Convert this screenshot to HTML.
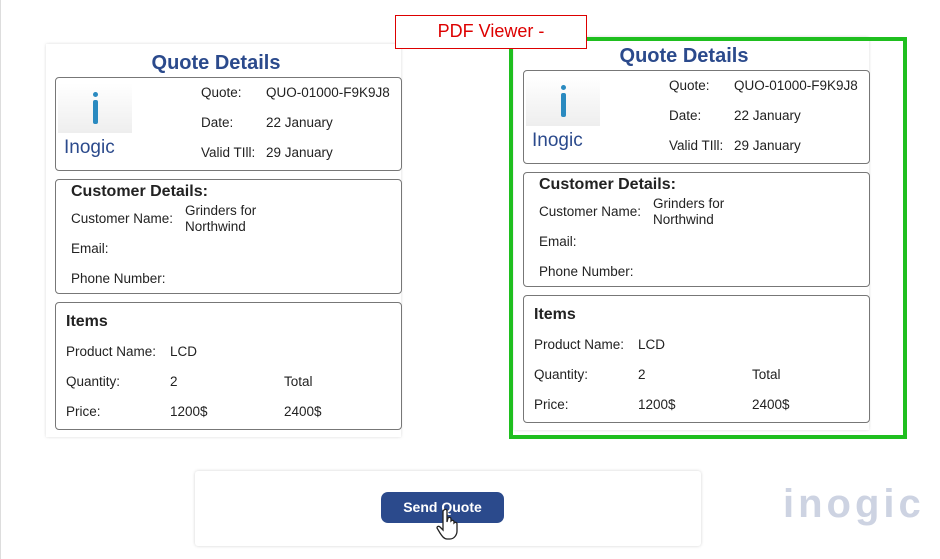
<!DOCTYPE html>
<html><head><style>
body{margin:0;width:940px;height:559px;background:#fff;position:relative;overflow:hidden;font-family:"Liberation Sans",sans-serif;color:#222;}
.card{position:absolute;width:355px;height:393px;background:#fff;box-shadow:0 0 3px rgba(0,0,0,.15);}
.card .t{position:absolute;left:0;width:340px;text-align:center;top:8px;font-size:20px;font-weight:bold;color:#2b4a8c;}
.box{position:absolute;left:9px;width:347px;border:1px solid #777;border-radius:4px;box-sizing:border-box;}
.a{position:absolute;font-size:13.5px;white-space:nowrap;line-height:16px;}
.h{position:absolute;font-size:16px;font-weight:bold;}
</style></head><body>
<div style="position:absolute;left:0;top:0;width:1px;height:559px;background:#ddd"></div>

<div class="card" style="left:46px;top:44px">
 <div class="t">Quote Details</div>
 <div class="box" style="top:33px;height:94px">
  <div style="position:absolute;left:2px;top:5px;width:74px;height:50px;background:linear-gradient(#fff,#eee)"><div style="position:absolute;left:35px;top:9px;width:5px;height:5px;border-radius:50%;background:#2a8ac0"></div><div style="position:absolute;left:35px;top:17px;width:5px;height:24px;border-radius:2px;background:#2a8ac0"></div></div>
  <div class="a" style="left:8px;top:59px;font-size:19px;line-height:22px;color:#2b4a8c">Inogic</div>
  <div class="a" style="left:145px;top:7px">Quote:</div><div class="a" style="left:210px;top:7px">QUO-01000-F9K9J8</div>
  <div class="a" style="left:145px;top:37px">Date:</div><div class="a" style="left:210px;top:37px">22 January</div>
  <div class="a" style="left:145px;top:67px">Valid TIll:</div><div class="a" style="left:210px;top:67px">29 January</div>
 </div>
 <div class="box" style="top:135px;height:115px">
  <div class="h" style="left:15px;top:3px">Customer Details:</div>
  <div class="a" style="left:15px;top:31px">Customer Name:</div>
  <div class="a" style="left:129px;top:23px">Grinders for<br>Northwind</div>
  <div class="a" style="left:15px;top:61px">Email:</div>
  <div class="a" style="left:15px;top:91px">Phone Number:</div>
 </div>
 <div class="box" style="top:258px;height:128px">
  <div class="h" style="left:10px;top:10px">Items</div>
  <div class="a" style="left:10px;top:41px">Product Name:</div><div class="a" style="left:114px;top:41px">LCD</div>
  <div class="a" style="left:10px;top:71px">Quantity:</div><div class="a" style="left:114px;top:71px">2</div><div class="a" style="left:228px;top:71px">Total</div>
  <div class="a" style="left:10px;top:101px">Price:</div><div class="a" style="left:114px;top:101px">1200$</div><div class="a" style="left:228px;top:101px">2400$</div>
 </div>
</div>

<div class="card" style="left:514px;top:37px">
 <div class="t">Quote Details</div>
 <div class="box" style="top:33px;height:94px">
  <div style="position:absolute;left:2px;top:5px;width:74px;height:50px;background:linear-gradient(#fff,#eee)"><div style="position:absolute;left:35px;top:9px;width:5px;height:5px;border-radius:50%;background:#2a8ac0"></div><div style="position:absolute;left:35px;top:17px;width:5px;height:24px;border-radius:2px;background:#2a8ac0"></div></div>
  <div class="a" style="left:8px;top:59px;font-size:19px;line-height:22px;color:#2b4a8c">Inogic</div>
  <div class="a" style="left:145px;top:7px">Quote:</div><div class="a" style="left:210px;top:7px">QUO-01000-F9K9J8</div>
  <div class="a" style="left:145px;top:37px">Date:</div><div class="a" style="left:210px;top:37px">22 January</div>
  <div class="a" style="left:145px;top:67px">Valid TIll:</div><div class="a" style="left:210px;top:67px">29 January</div>
 </div>
 <div class="box" style="top:135px;height:115px">
  <div class="h" style="left:15px;top:3px">Customer Details:</div>
  <div class="a" style="left:15px;top:31px">Customer Name:</div>
  <div class="a" style="left:129px;top:23px">Grinders for<br>Northwind</div>
  <div class="a" style="left:15px;top:61px">Email:</div>
  <div class="a" style="left:15px;top:91px">Phone Number:</div>
 </div>
 <div class="box" style="top:258px;height:128px">
  <div class="h" style="left:10px;top:10px">Items</div>
  <div class="a" style="left:10px;top:41px">Product Name:</div><div class="a" style="left:114px;top:41px">LCD</div>
  <div class="a" style="left:10px;top:71px">Quantity:</div><div class="a" style="left:114px;top:71px">2</div><div class="a" style="left:228px;top:71px">Total</div>
  <div class="a" style="left:10px;top:101px">Price:</div><div class="a" style="left:114px;top:101px">1200$</div><div class="a" style="left:228px;top:101px">2400$</div>
 </div>
</div>
<div style="position:absolute;left:509px;top:37px;width:398px;height:402px;border:4px solid #1fbf1f;box-sizing:border-box"></div>

<div style="position:absolute;left:395px;top:15px;width:192px;height:34px;border:1.5px solid #d00;box-sizing:border-box;background:#fff;color:#d00;font-size:18px;text-align:center;line-height:31px">PDF Viewer -</div>

<div style="position:absolute;left:195px;top:471px;width:506px;height:75px;background:#fff;box-shadow:0 0 3px rgba(0,0,0,.18);border-radius:3px"></div>
<div style="position:absolute;left:381px;top:492px;width:123px;height:31px;background:#2b4a8c;border-radius:7px;color:#fff;font-weight:bold;font-size:14px;text-align:center;line-height:31px">Send Quote</div>
<svg style="position:absolute;left:436px;top:508px" width="26" height="32" viewBox="0 0 26 32"><path d="M8 2c1-1 3-1 3 1v11l1-4c1-1 3-1 3 1v2c1-1 3-1 3 1v1c1-1 3-1 3 1v7c0 4-3 8-7 8h-3c-3 0-5-3-7-6l-3-5c0-2 2-2 3-1l3 3V3z" fill="#fff" stroke="#222" stroke-width="1.3"/></svg>
<div style="position:absolute;left:783px;top:482px;font-size:40px;font-weight:bold;color:#cdd3e2;letter-spacing:4px;font-family:'Liberation Sans',sans-serif">inogic</div>
</body></html>
